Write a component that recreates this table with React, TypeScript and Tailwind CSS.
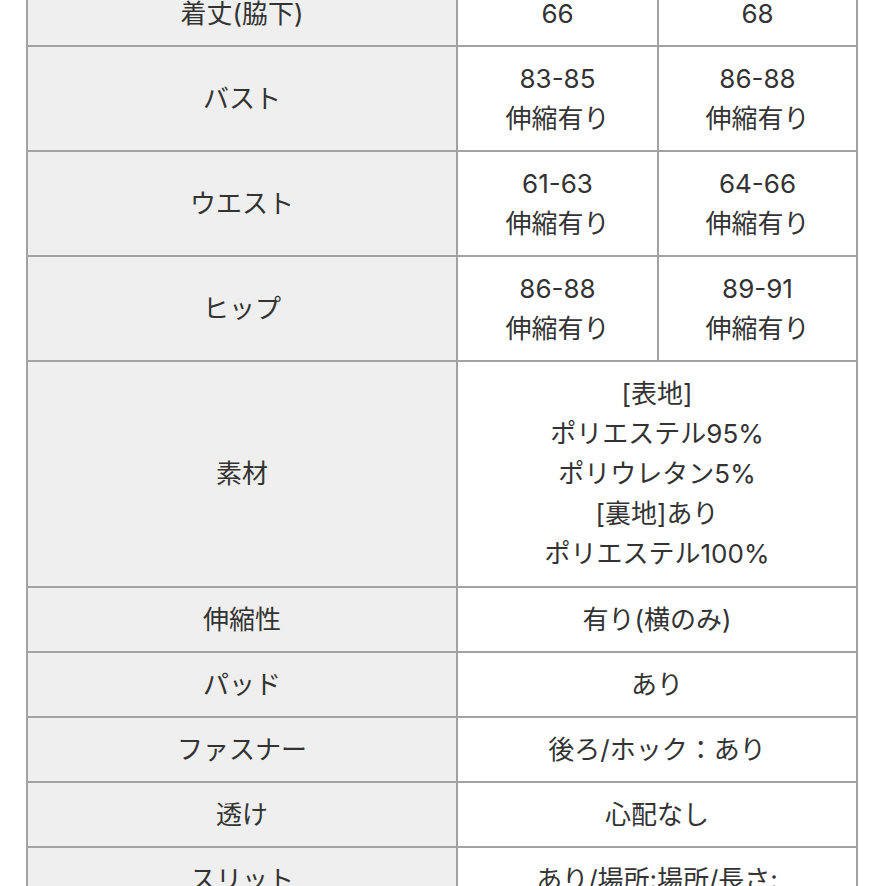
import React from "react";

type Row = { label: string; cells: string[][]; span?: boolean; extra?: string };

const rows: Row[] = [
  { label: "着丈(脇下)", cells: [["66"], ["68"]] },
  { label: "バスト", cells: [["83-85", "伸縮有り"], ["86-88", "伸縮有り"]] },
  { label: "ウエスト", cells: [["61-63", "伸縮有り"], ["64-66", "伸縮有り"]] },
  { label: "ヒップ", cells: [["86-88", "伸縮有り"], ["89-91", "伸縮有り"]] },
  {
    label: "素材",
    span: true,
    extra: "py-[12px]",
    cells: [["[表地]", "ポリエステル95%", "ポリウレタン5%", "[裏地]あり", "ポリエステル100%"]],
  },
  { label: "伸縮性", span: true, cells: [["有り(横のみ)"]] },
  { label: "パッド", span: true, cells: [["あり"]] },
  { label: "ファスナー", span: true, cells: [["後ろ/ホック：あり"]] },
  { label: "透け", span: true, cells: [["心配なし"]] },
  { label: "スリット", span: true, cells: [["あり/場所:場所/長さ:"]] },
];

export default function App() {
  return (
    <div
      className="bg-white min-h-screen w-full overflow-hidden text-[#333333]"
      style={{ fontFamily: '"Inter", "Noto Sans CJK JP", sans-serif' }}
    >
      <div className="ml-[26px] mt-[-20px] w-[832px] grid grid-cols-[428px_199px_197px] gap-[2px] p-[2px] bg-[#a2a2a2] text-[26px] leading-[40px]">
        {rows.map((r, i) => (
          <React.Fragment key={i}>
            <div
              className={`bg-[#efefef] flex items-center justify-center text-center py-[11.5px] ${r.extra ?? ""}`}
            >
              {r.label}
            </div>
            {r.cells.map((c, j) => (
              <div
                key={j}
                className={`bg-white flex flex-col items-center justify-center text-center py-[11.5px] ${
                  r.span ? "col-span-2" : ""
                } ${r.extra ?? ""}`}
              >
                {c.map((line, k) => (
                  <div key={k}>{line}</div>
                ))}
              </div>
            ))}
          </React.Fragment>
        ))}
      </div>
    </div>
  );
}
